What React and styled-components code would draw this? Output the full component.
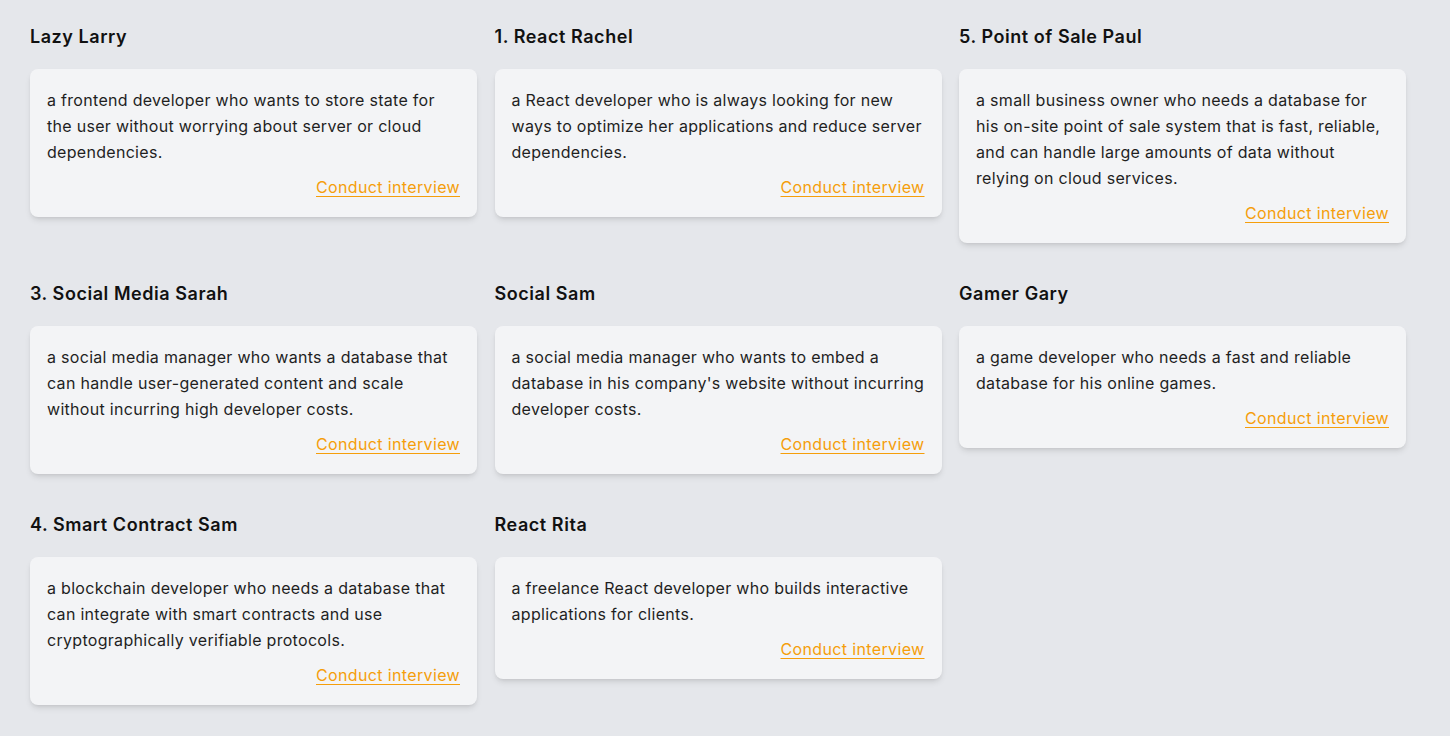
import React from "react";
import styled, { createGlobalStyle } from "styled-components";

const Global = createGlobalStyle`
  html, body { margin: 0; padding: 0; background: #e5e7eb; }
  body { font-family: Inter, "Noto Sans", "Liberation Sans", sans-serif; color: #111827; -webkit-font-smoothing: antialiased; }
`;

const Page = styled.main`
  min-height: 736px;
  box-sizing: border-box;
  padding: 23px 30px 30px;
  display: grid;
  grid-template-columns: repeat(3, 447px);
  column-gap: 17.5px;
  row-gap: 35.5px;
  align-items: start;
`;

const Persona = styled.section`
  display: flex;
  flex-direction: column;
`;

const Name = styled.h2`
  margin: 0 0 18px;
  font-size: 18px;
  line-height: 28px;
  font-weight: 600;
  letter-spacing: 0.55px;
  color: #111;
`;

const Card = styled.div`
  background: #f3f4f6;
  border-radius: 8px;
  padding: 18px 17px 17px;
  box-shadow: 0 4px 6px -1px rgba(0, 0, 0, 0.1), 0 2px 4px -2px rgba(0, 0, 0, 0.1);
  display: flex;
  flex-direction: column;
`;

const Desc = styled.p`
  margin: 0;
  font-size: 16px;
  line-height: 26px;
  letter-spacing: 0.3px;
  color: #1f1f1f;
`;

const Actions = styled.div`
  margin-top: 9px;
  display: flex;
  justify-content: flex-end;
`;

const Link = styled.a`
  font-size: 16px;
  line-height: 26px;
  letter-spacing: 0.36px;
  color: #f59e0b;
  text-decoration: underline;
  text-underline-offset: 3px;
  cursor: pointer;
`;

const personas = [
  { name: "Lazy Larry", desc: "a frontend developer who wants to store state for the user without worrying about server or cloud dependencies." },
  { name: "1. React Rachel", desc: "a React developer who is always looking for new ways to optimize her applications and reduce server dependencies." },
  { name: "5. Point of Sale Paul", desc: "a small business owner who needs a database for his on-site point of sale system that is fast, reliable, and can handle large amounts of data without relying on cloud services." },
  { name: "3. Social Media Sarah", desc: "a social media manager who wants a database that can handle user-generated content and scale without incurring high developer costs." },
  { name: "Social Sam", desc: "a social media manager who wants to embed a database in his company's website without incurring developer costs." },
  { name: "Gamer Gary", desc: "a game developer who needs a fast and reliable database for his online games." },
  { name: "4. Smart Contract Sam", desc: "a blockchain developer who needs a database that can integrate with smart contracts and use cryptographically verifiable protocols." },
  { name: "React Rita", desc: "a freelance React developer who builds interactive applications for clients." },
];

export default function App() {
  return (
    <>
      <Global />
      <Page>
        {personas.map((p) => (
          <Persona key={p.name}>
            <Name>{p.name}</Name>
            <Card>
              <Desc>{p.desc}</Desc>
              <Actions>
                <Link>Conduct interview</Link>
              </Actions>
            </Card>
          </Persona>
        ))}
      </Page>
    </>
  );
}
